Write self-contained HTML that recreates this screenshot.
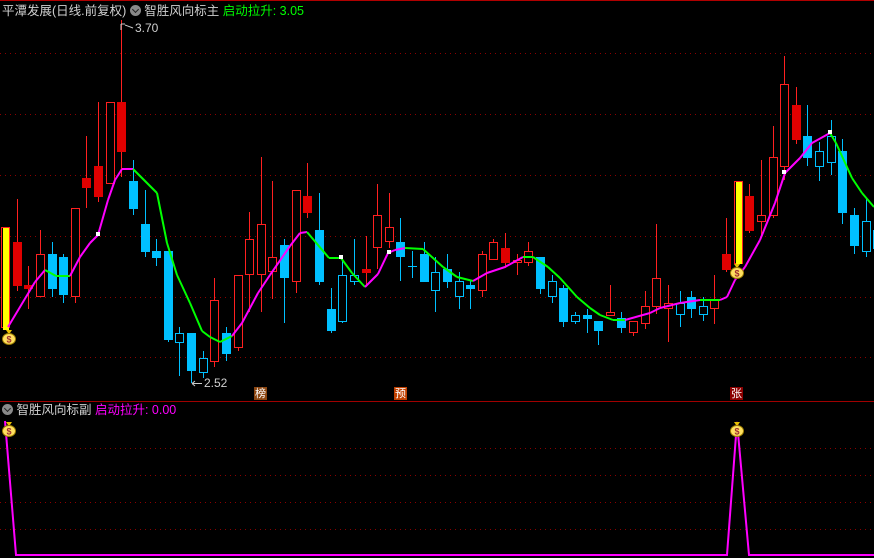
<!DOCTYPE html>
<html><head><meta charset="utf-8"><style>
html,body{margin:0;padding:0;background:#000;width:874px;height:558px;overflow:hidden}
#c{position:absolute;left:0;top:0}
.t{position:absolute;font-family:"Liberation Sans","Noto Sans CJK SC",sans-serif;font-size:12.5px;white-space:nowrap;line-height:15px}
.ic{display:inline-block;width:11px;height:11px;border-radius:50%;background:#8a8a8a;vertical-align:-1px;position:relative}
.ic:after{content:"";position:absolute;left:3px;top:2px;width:4px;height:4px;border-right:1.5px solid #222;border-bottom:1.5px solid #222;transform:rotate(45deg)}
.lab{position:absolute;width:13px;height:13px;color:#fff;font-family:"Noto Sans CJK SC",sans-serif;font-size:11px;line-height:13px;text-align:center}
</style></head><body>
<svg id="c" width="874" height="558" xmlns="http://www.w3.org/2000/svg"></svg>
<div class="t" style="left:2px;top:4px;color:#d0d0d0">平潭发展(日线.前复权) <span class="ic"></span> 智胜风向标主 <span style="color:#00ff00">启动拉升: 3.05</span></div>
<div class="t" style="left:2px;top:403px;color:#d0d0d0"><span class="ic"></span> 智胜风向标副 <span style="color:#ff00ff">启动拉升: 0.00</span></div>
<div class="t" style="left:135px;top:21px;color:#d0d0d0;font-size:12px">3.70</div>
<div class="t" style="left:204px;top:376px;color:#d0d0d0;font-size:12px">2.52</div>
<div class="lab" style="left:254px;top:387px;background:#8b4510">榜</div>
<div class="lab" style="left:394px;top:387px;background:#c04000">预</div>
<div class="lab" style="left:730px;top:387px;background:#8b0000">张</div>
<script>
var S=document.getElementById('c'),h='';
function L(x1,y1,x2,y2,c,w,d){h+='<line x1="'+x1+'" y1="'+y1+'" x2="'+x2+'" y2="'+y2+'" stroke="'+c+'" stroke-width="'+(w||1)+'"'+(d?' stroke-dasharray="'+d+'"':'')+'/>';}
h+='<rect x="0" y="0" width="874" height="1" fill="#b00000"/>';
[53,114,175,236,297,357].forEach(function(y){L(0,y+.5,874,y+.5,'#8b0000',1,'1 4');});
[448,475,502,529].forEach(function(y){L(0,y+.5,874,y+.5,'#8b0000',1,'1 4');});
L(0,401.5,874,401.5,'#a00000',1);
var D=[
['r',227,328,227,330],['R',242,286,199,291],['R',285,289,266,309],['r',254,297,230,297],['B',254,289,242,297],['B',257,295,254,303],['r',208,297,208,303],['R',178,188,136,208],['R',166,197,102,202],['r',102,184,102,184],
['R',102,152,20,177],['B',181,209,160,215],['B',224,252,190,257],['B',251,258,239,266],['B',251,340,251,342],['b',333,343,327,376],['B',333,371,333,383],['b',358,373,351,378],['r',300,362,278,367],['B',333,354,327,361],
['r',275,348,275,351],['r',239,275,212,312],['r',224,275,157,312],['r',257,272,181,299],['B',245,278,239,323],['r',190,282,190,293],['R',196,213,163,218],['B',230,282,193,285],['B',309,331,288,333],['b',275,322,260,323],
['b',275,282,239,285],['R',269,273,236,285],['r',215,248,184,269],['r',227,242,193,248],['B',242,257,218,281],['X',266,266,251,278],['B',254,282,242,282],['b',272,291,257,312],['B',269,282,254,288],['b',281,297,272,309],
['B',285,289,281,309],['r',254,291,251,297],['r',242,260,239,260],['R',248,263,233,268],['r',260,263,254,275],['r',251,263,242,266],['B',257,289,257,294],['b',281,297,275,303],['B',288,322,285,327],['b',315,322,312,324],
['B',315,319,309,333],['B',321,331,321,345],['r',312,316,285,316],['B',318,328,312,333],['r',321,333,321,336],['r',306,324,291,329],['r',278,307,224,314],['r',303,309,285,342],['b',303,315,291,327],['B',297,309,291,318],
['b',306,315,297,321],['r',300,309,275,324],['R',254,270,218,272],['r',181,264,181,264],['R',196,231,184,233],['r',215,222,160,237],['r',157,216,126,218],['r',84,167,56,180],['R',105,140,87,144],['B',136,158,105,166],
['b',151,167,142,181],['b',136,163,120,175],['B',151,213,139,224],['B',215,246,208,254],['b',221,252,199,257],['B',230,249,226,252]];
D.forEach(function(d,i){
 var x=5+11.63*i,t=d[0],red=(t=='r'||t=='R'),col=red?(t=='R'?'#e00000':'#ff2020'):'#00c0ff';
 var xr=Math.round(x);
 L(xr+.5,d[3],xr+.5,d[4],red?'#ff2020':'#00c0ff',1);
 var bh=Math.max(d[2]-d[1],1);
 if(t=='X'){L(xr-4,d[1]+.5,xr+5,d[1]+.5,col,1);return;}
 if(t=='R'||t=='B') h+='<rect x="'+(xr-4)+'" y="'+d[1]+'" width="9" height="'+Math.max(bh,3)+'" fill="'+col+'"/>';
 else h+='<rect x="'+(xr-3.5)+'" y="'+(d[1]+.5)+'" width="8" height="'+Math.max(bh-1,2)+'" fill="#000" stroke="'+col+'" stroke-width="1"/>';
});
h+='<rect x="3" y="228" width="6" height="102" fill="#ffff00"/>';
h+='<rect x="736" y="182" width="6" height="82" fill="#ffff00"/>';
var P=[[8,327,'m'],[35,282,'m'],[45,270,'g'],[56,276,'g'],[70,276,'m'],[80,257,'m'],[90,243,'m'],[98,235,'m'],[108,200,'m'],[115,180,'m'],[122,169,'m'],[133,169,'g'],[157,193,'g'],[167,243,'g'],[177,275,'g'],[190,303,'g'],[202,331,'g'],[210,337,'g'],[220,342,'g'],[232,336,'m'],[242,323,'m'],[258,293,'m'],[270,275,'m'],[290,246,'m'],[300,233,'m'],[307,232,'g'],[329,258,'g'],[339,258,'m'],[341,258,'g'],[352,273,'g'],[365,287,'m'],[378,274,'m'],[388,253,'m'],[395,250,'m'],[405,248,'g'],[423,249,'g'],[443,267,'g'],[457,277,'g'],[473,281,'m'],[487,273,'m'],[505,267,'m'],[523,257,'g'],[533,257,'g'],[548,267,'g'],[560,278,'g'],[577,297,'g'],[590,308,'g'],[600,315,'g'],[613,320,'g'],[625,320,'m'],[650,313,'m'],[660,308,'m'],[680,303,'m'],[700,300,'g'],[720,300,'m'],[727,297,'m'],[735,280,'m'],[745,267,'m'],[760,240,'m'],[775,203,'m'],[785,173,'m'],[800,158,'m'],[812,143,'m'],[830,133,'g'],[836,143,'g'],[852,178,'g'],[862,193,'g'],[874,207,'g']];
for(var i=0;i<P.length-1;i++)L(P[i][0],P[i][1],P[i+1][0],P[i+1][1],P[i][2]=='m'?'#ff00ff':'#00ff00',2);
[[98,234],[341,257],[389,252],[784,172],[830,132]].forEach(function(p){h+='<rect x="'+(p[0]-2)+'" y="'+(p[1]-2)+'" width="4" height="4" fill="#fff"/>';});
L(121,24,121,30,'#ccc',1);L(121,24,125,24,'#ccc',1);L(125,25,133,28,'#ccc',1);
L(192,383.5,202,383.5,'#ccc',1);L(192,383.5,195,381,'#ccc',1);L(192,383.5,195,386,'#ccc',1);
h+='<polyline points="5,421 16,555 727,555 737,422 749,555 874,555" fill="none" stroke="#ff00ff" stroke-width="2"/>';
function bag(x,y){h+='<g><path d="M'+(x-3)+' '+(y-8)+' L'+(x+3)+' '+(y-8)+' L'+(x+1)+' '+(y-5)+' L'+(x-1)+' '+(y-5)+' Z" fill="#e8c000"/><ellipse cx="'+x+'" cy="'+(y+1)+'" rx="6.5" ry="5.5" fill="#ffe060" stroke="#a08000" stroke-width="1"/><text x="'+x+'" y="'+(y+4.5)+'" font-size="9" font-family="Liberation Sans" text-anchor="middle" fill="#a03030" font-weight="bold">$</text></g>';}
bag(9,338);bag(737,272);bag(9,430);bag(737,430);
S.innerHTML=h;
</script>
</body></html>
